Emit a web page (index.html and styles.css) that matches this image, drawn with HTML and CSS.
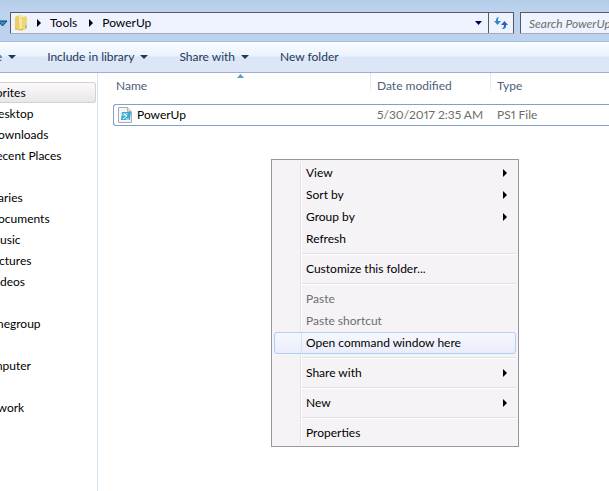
FILE: index.html
```html
<!DOCTYPE html>
<html lang="en">
<head>
<meta charset="utf-8">
<title>PowerUp</title>
<link rel="stylesheet" href="styles.css">
</head>
<body>
<div class="window">
  <header class="topbar">
    <button class="history" aria-label="Recent locations">
      <svg width="9" height="7" viewBox="0 0 9 7"><path d="M0 1h9L4.500 6z" fill="#2f8fc8" stroke="#123c6c"/></svg>
    </button>
    <div class="address">
      <svg class="folder" width="14" height="18" viewBox="0 0 14 18">
        <path d="M1 3l4-2v14l-4 1z" fill="#e9cf68"/>
        <path d="M5 1h4v14H5z" fill="#f9edaa"/>
        <path d="M6 4l5-2 2 1v12l-6 2-2-1z" fill="#efd778"/>
        <path d="M7 5v11" stroke="#fff6c9"/>
        <path d="M1 14l4 2 4-1" stroke="#d4b445" fill="none"/>
        <path d="M12 11v3" stroke="#55b5d9"/>
      </svg>
      <svg class="crumb-arrow" width="4" height="8" viewBox="0 0 4 8"><path d="M0 0l4 4-4 4z"/></svg>
      <a class="crumb crumb-parent" href="#">Tools</a>
      <svg class="crumb-arrow" width="4" height="8" viewBox="0 0 4 8"><path d="M0 0l4 4-4 4z"/></svg>
      <a class="crumb" href="#">PowerUp</a>
      <button class="drop" aria-label="Previous locations">
        <svg width="7" height="4" viewBox="0 0 7 4"><path d="M0 0h7L3.500 4z" fill="#000060"/></svg>
      </button>
      <button class="refresh" aria-label="Refresh">
        <svg width="14" height="12" viewBox="0 0 14 12">
          <path d="M5 0C3 0 2 1 2 4H0l3.500 4L7 4H4c0-2 0-3 1-4z" fill="#3187cb"/>
          <path d="M8 12c3 0 4-1 4-4h2l-3.500-4L7 8h3c0 2-1 3-2 4z" fill="#2a62b4"/>
        </svg>
      </button>
    </div>
    <input class="search" type="text" aria-label="Search PowerUp" placeholder="Search PowerUp">
  </header>

  <div class="toolbar">
    <button class="tool organize">Organize <svg width="8" height="4" viewBox="0 0 8 4"><path d="M0 0h8L4 4z"/></svg></button>
    <button class="tool">Include in library <svg width="8" height="4" viewBox="0 0 8 4"><path d="M0 0h8L4 4z"/></svg></button>
    <button class="tool">Share with <svg width="8" height="4" viewBox="0 0 8 4"><path d="M0 0h8L4 4z"/></svg></button>
    <button class="tool">New folder</button>
  </div>

  <div class="content">
    <nav class="tree">
      <div class="group">
        <a class="root selected" href="#"><span>Favorites</span></a>
        <a href="#"><span>Desktop</span></a>
        <a href="#"><span>Downloads</span></a>
        <a href="#"><span>Recent Places</span></a>
      </div>
      <div class="group">
        <a class="root" href="#"><span>Libraries</span></a>
        <a href="#"><span>Documents</span></a>
        <a href="#"><span>Music</span></a>
        <a href="#"><span>Pictures</span></a>
        <a href="#"><span>Videos</span></a>
      </div>
      <div class="group"><a class="root" href="#"><span>Homegroup</span></a></div>
      <div class="group"><a class="root" href="#"><span>Computer</span></a></div>
      <div class="group"><a class="root" href="#"><span>Network</span></a></div>
    </nav>

    <main class="files">
      <svg class="sort" width="7" height="4" viewBox="0 0 7 4"><path d="M0 4L3.500 0 7 4z" fill="#5a9cb8"/></svg>
      <table>
        <thead>
          <tr><th class="col-name">Name</th><th class="col-date">Date modified</th><th>Type</th></tr>
        </thead>
        <tbody>
          <tr>
            <td class="name"><div class="file">
              <svg width="14" height="16" viewBox="0 0 14 16">
                <path d="M.5.500h9l4 4v11H.5z" fill="#f6f6f6" stroke="#a9adb1"/>
                <path d="M9.500.500v4h4" fill="#ddd" stroke="#b4b4b4"/>
                <path d="M4 5h9l-1 8H3z" fill="#3ba8d3"/>
                <path d="M5 6h5l-1 3H4z" fill="#7fd2ec"/>
                <path d="M6 7l3 2-4 3M8 12h3" stroke="#fff" fill="none"/>
              </svg>PowerUp</div></td>
            <td>5/30/2017 2:35 AM</td>
            <td>PS1 File</td>
          </tr>
        </tbody>
      </table>
    </main>
  </div>

  <div class="menu" role="menu">
    <button role="menuitem">View<svg width="4" height="8" viewBox="0 0 4 8"><path d="M0 0l4 4-4 4z"/></svg></button>
    <button role="menuitem">Sort by<svg width="4" height="8" viewBox="0 0 4 8"><path d="M0 0l4 4-4 4z"/></svg></button>
    <button role="menuitem">Group by<svg width="4" height="8" viewBox="0 0 4 8"><path d="M0 0l4 4-4 4z"/></svg></button>
    <button role="menuitem">Refresh</button>
    <hr>
    <button role="menuitem">Customize this folder...</button>
    <hr>
    <button role="menuitem" disabled>Paste</button>
    <button role="menuitem" disabled>Paste shortcut</button>
    <button role="menuitem" class="active">Open command window here</button>
    <hr>
    <button role="menuitem">Share with<svg width="4" height="8" viewBox="0 0 4 8"><path d="M0 0l4 4-4 4z"/></svg></button>
    <hr>
    <button role="menuitem">New<svg width="4" height="8" viewBox="0 0 4 8"><path d="M0 0l4 4-4 4z"/></svg></button>
    <hr>
    <button role="menuitem">Properties</button>
  </div>
</div>
</body>
</html>
```
FILE: styles.css
```css
* {
  box-sizing: border-box;
}

body {
  margin: 0;
  background: #fff;
  color: #000;
  font: 12px/16px Lato, "Open Sans", sans-serif;
}

button,
input {
  margin: 0;
  padding: 0;
  border: 0;
  background: none;
  color: inherit;
  font: inherit;
}

a {
  color: inherit;
  text-decoration: none;
}

.window {
  position: relative;
  display: flex;
  flex-direction: column;
  min-height: 100vh;
  overflow: hidden;
}

.topbar {
  display: flex;
  height: 42px;
  padding-top: 12px;
  overflow: hidden;
  background: linear-gradient(#b4cce6, #bdd2ef 12px);
  border-bottom: 1px solid #a5bddb;
}

.history {
  display: flex;
  align-items: center;
  width: 10px;
  height: 22px;
  margin-left: -2px;
  margin-right: 2px;
}

.address {
  display: flex;
  flex: 1;
  align-items: center;
  height: 22px;
  padding-left: 3px;
  background: #eff3ff;
  border: 1px solid #56595e;
  border-bottom-color: #a9abb5;
  border-radius: 1px;
}

.crumb-arrow {
  margin: 0 9px;
}

.crumb-parent {
  margin-right: 3px;
}

.drop {
  width: 20px;
  height: 20px;
  margin-left: auto;
}

.drop svg,
.refresh svg {
  display: block;
  margin: auto;
}

.refresh {
  width: 25px;
  height: 20px;
  border-left: 1px solid #56595e;
}

.search {
  flex: 0 0 120px;
  width: 120px;
  height: 22px;
  margin-left: 6px;
  margin-right: -31px;
  padding: 0 8px;
  background: #eff3ff;
  border: 1px solid #56595e;
  border-bottom-color: #a9abb5;
  border-radius: 1px;
}

.search::placeholder {
  color: #6d6d6d;
  font-style: italic;
  opacity: 1;
}

.toolbar {
  display: flex;
  align-items: center;
  gap: 31px;
  height: 31px;
  padding-bottom: 1px;
  background: linear-gradient(#fbfdff, #e9f2fd 14px, #dce6f6 15px, #dce6f6);
  border-bottom: 1px solid #a0afc9;
  color: #1e395b;
}

.tool {
  display: flex;
  align-items: center;
  gap: 6px;
  white-space: nowrap;
}

.organize {
  margin-left: -45px;
}

.tool svg {
  fill: #1e395b;
}

.content {
  display: flex;
  flex: 1;
}

.tree {
  flex: 0 0 98px;
  padding-top: 9px;
  overflow: hidden;
  border-right: 1px solid #d9e5f3;
}

.group {
  margin-bottom: 21px;
}

.tree a {
  display: block;
  height: 21px;
  margin-right: 1px;
  padding: 2px 0;
  border: 1px solid transparent;
  border-left: 0;
  line-height: 16px;
  white-space: nowrap;
}

.tree span {
  margin-left: -11px;
}

.tree .root span {
  margin-left: -22px;
}

.tree .selected {
  background: linear-gradient(#fbfafb, #e9e6e9);
  border-color: #d5cfd3;
  border-radius: 0 3px 3px 0;
}

.files {
  position: relative;
  flex: 1;
  padding-left: 15px;
}

.sort {
  position: absolute;
  top: 1px;
  left: 139px;
}

table {
  width: 100%;
  border-collapse: separate;
  border-spacing: 0;
  table-layout: fixed;
}

th {
  height: 31px;
  padding: 5px 7px 10px;
  color: #4c607a;
  font-weight: 400;
  text-align: left;
  background: linear-gradient(#d9e6f4, #e4edf7 12px, #fff) left top / 1px 21px no-repeat;
}

.col-name {
  width: 257px;
  padding-left: 3px;
  background: none;
}

.col-date {
  width: 120px;
}

td {
  height: 22px;
  padding: 0 0 0 7px;
  white-space: nowrap;
  font-variant-numeric: proportional-nums;
  border-top: 1px solid #7da2ce;
  border-bottom: 1px solid #7da2ce;
  color: #6d6d6d;
}

td.name {
  padding-left: 4px;
  border-left: 1px solid #7da2ce;
  border-radius: 3px 0 0 3px;
  color: #000;
}

.file {
  display: flex;
  align-items: center;
  gap: 5px;
}

.menu {
  position: absolute;
  top: 159px;
  left: 271px;
  width: 248px;
  padding: 2px;
  background: linear-gradient(90deg, #e2e3e3 1px, #fff 1px) 28px 2px / 2px calc(100% - 4px) no-repeat #f6f3f7;
  border: 1px solid #979797;
}

.menu button {
  display: flex;
  align-items: center;
  justify-content: space-between;
  width: 100%;
  height: 22px;
  padding: 0 8px 0 31px;
  border: 1px solid transparent;
  border-radius: 3px;
  text-align: left;
}

.menu button:disabled {
  color: #6d6d6d;
}

.menu .active {
  background: linear-gradient(90deg, #d9dff2 1px, transparent 1px) 26px 0 / 2px 100% no-repeat, linear-gradient(#f7f7fd, #e9edfb);
  border-color: #aecff7;
}

.menu hr {
  height: 2px;
  margin: 3px 0 3px 28px;
  border: 0;
  border-top: 1px solid #e0e0e0;
  border-bottom: 1px solid #fff;
}
```
